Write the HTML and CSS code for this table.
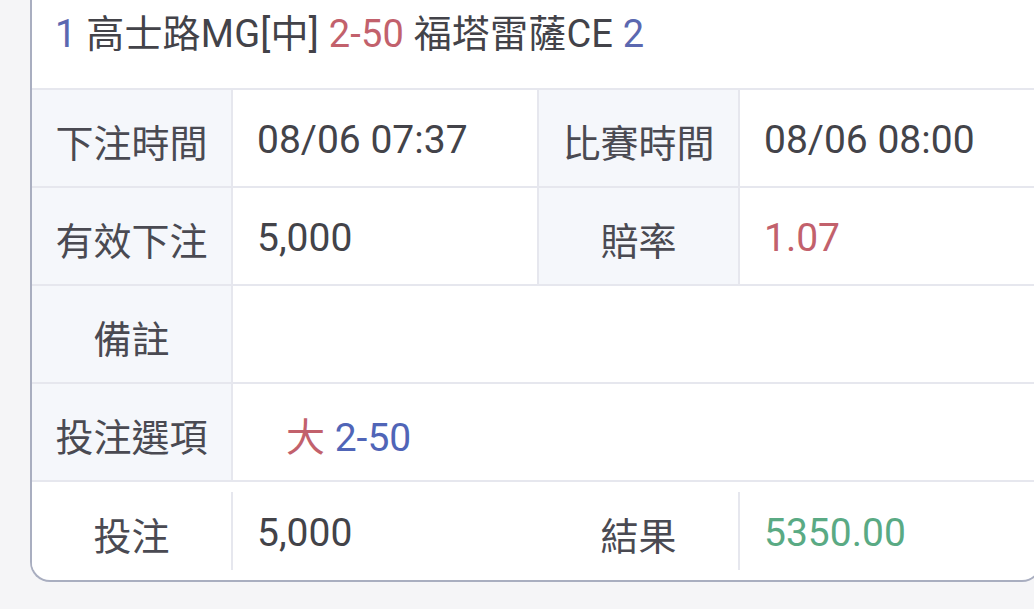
FILE: index.html
```html
<!DOCTYPE html>
<html lang="zh-Hant">
<head>
    <meta charset="UTF-8">
    <meta name="viewport" content="width=device-width, initial-scale=1.0">
    <title>注單詳情</title>
    <link rel="stylesheet" href="styles.css">
</head>
<body>
    <div class="card">
        <div class="match">
            <span class="blue">1</span> 高士路MG[中] <span class="red">2-50</span> 福塔雷薩CE <span class="blue">2</span>
        </div>
        <div class="grid">
            <div class="label">下注時間</div>
            <div class="value">08/06 07:37</div>
            <div class="label">比賽時間</div>
            <div class="value last">08/06 08:00</div>

            <div class="label">有效下注</div>
            <div class="value">5,000</div>
            <div class="label">賠率</div>
            <div class="value last red">1.07</div>

            <div class="label">備註</div>
            <div class="value wide last"></div>

            <div class="label">投注選項</div>
            <div class="value wide last option"><span><span class="red">大</span> <span class="blue2">2-50</span></span></div>

            <div class="label foot">投注</div>
            <div class="value foot last">5,000</div>
            <div class="label foot">結果</div>
            <div class="value foot last green">5350.00</div>
        </div>
    </div>
</body>
</html>
```

FILE: styles.css
```css
body {
    margin: 0;
    background: #f5f5f7;
    font-family: Roboto, "Noto Sans CJK TC", sans-serif;
    color: #434349;
}
.card {
    margin-left: 30px;
    width: 1008px;
    background: #fff;
    border: 2px solid #a9aec0;
    border-top: none;
    border-radius: 0 0 20px 20px;
    overflow: hidden;
}
.match {
    height: 76px;
    padding: 12px 0 0 23px;
    font-size: 38px;
    line-height: 44px;
    letter-spacing: 0.2px;
    white-space: nowrap;
}
.blue {
    color: #5b68b0;
}
.blue2 {
    color: #5065b7;
}
.red {
    color: #c2616c;
}
.green {
    color: #5aaa84;
}
.grid {
    display: grid;
    grid-template-columns: 201px 306px 201px 1fr;
    grid-auto-rows: 98px;
    border-top: 2px solid #e6e7ee;
    font-size: 38px;
}
.label, .value {
    display: flex;
    align-items: center;
    box-sizing: border-box;
    border-right: 2px solid #e6e7ee;
    border-bottom: 2px solid #e6e7ee;
    padding-top: 4px;
}
.label {
    justify-content: center;
    background: #f5f7fb;
    color: #4a4a52;
}
.value {
    padding-left: 24px;
    font-size: 39px;
}
.value.last {
    border-right: none;
}
.wide {
    grid-column: span 3;
}
.option {
    padding-left: 53px;
}
.foot {
    height: 78px;
    margin: 10px 0;
    background: #fff;
    border-bottom: none;
}
```
